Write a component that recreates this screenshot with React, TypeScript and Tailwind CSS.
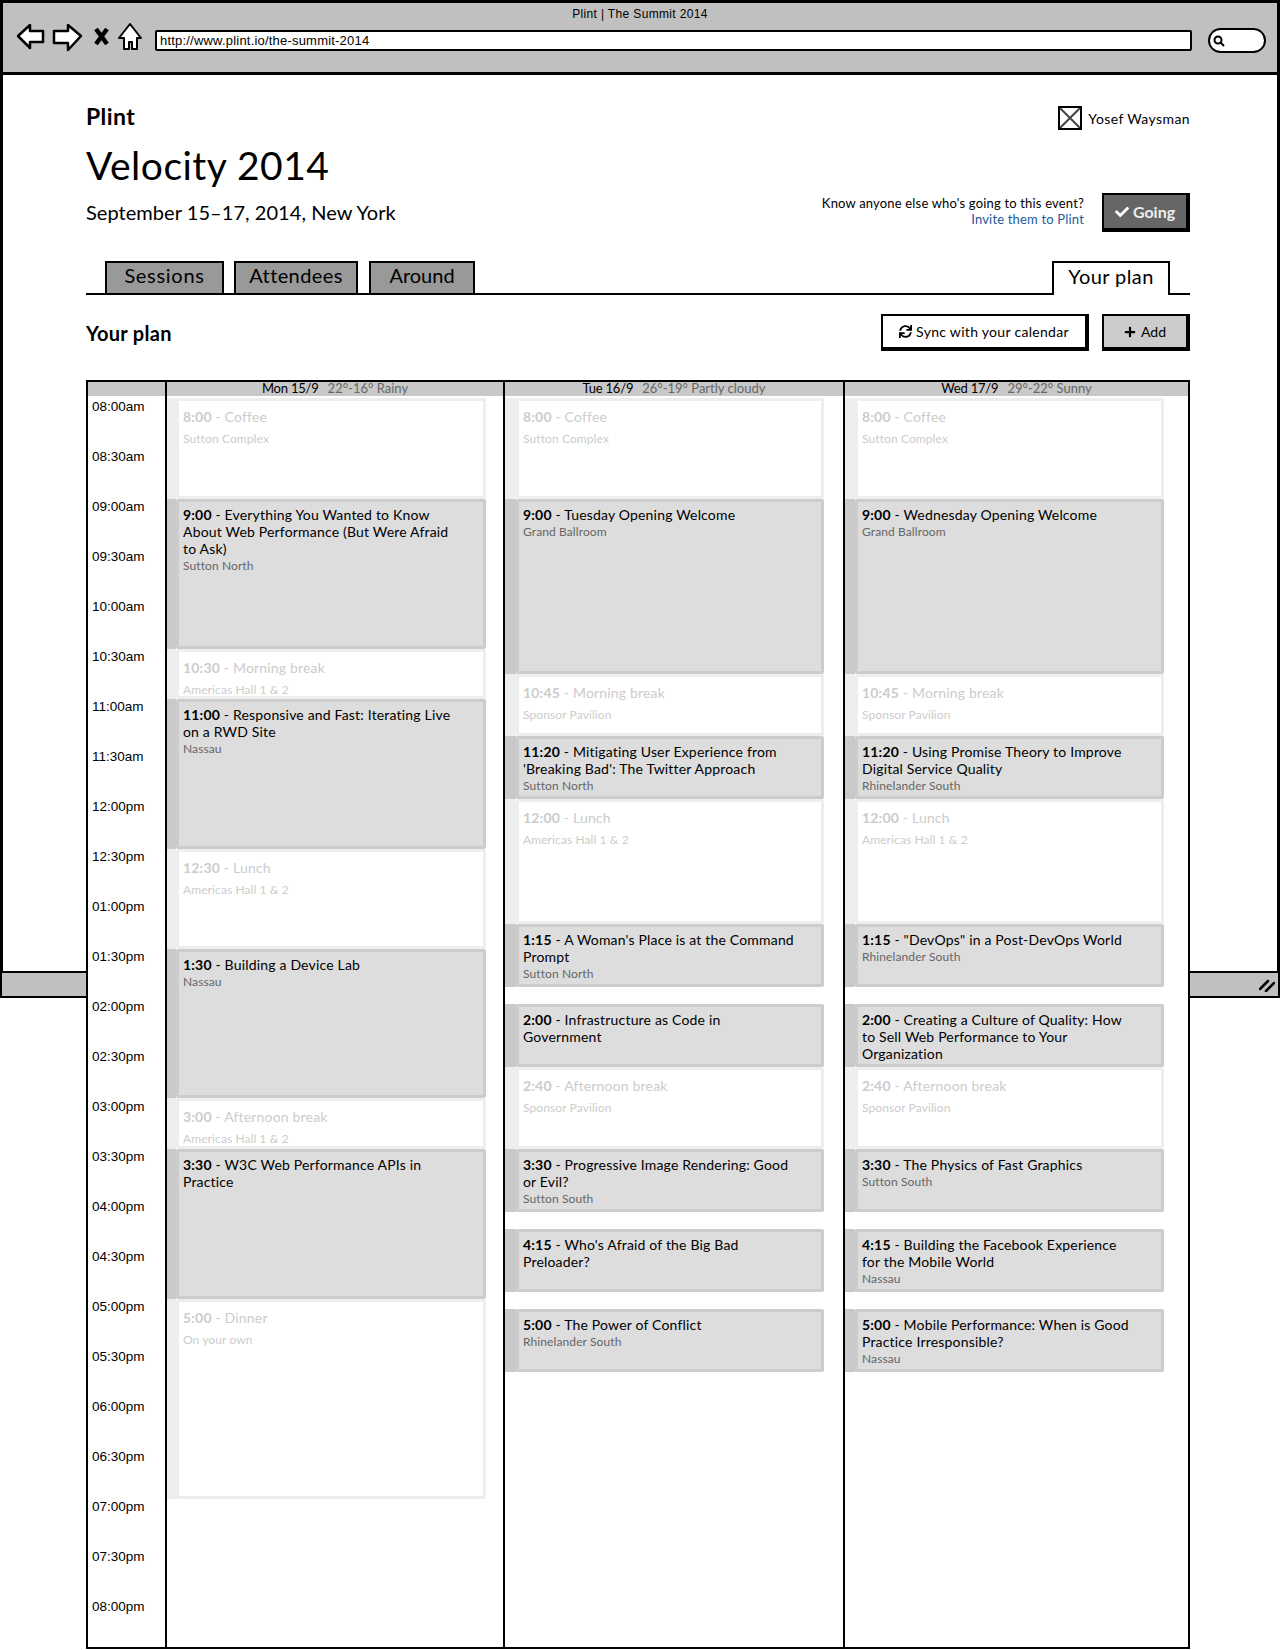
import { FaCheck, FaPlus, FaSync } from "react-icons/fa";

interface CalEvent {
  from: number;
  to: number;
  time: string;
  title: string;
  place?: string;
  soft?: boolean;
}

interface Day {
  label: string;
  weather: string;
  width: string;
  strip: string;
  card: string;
  events: CalEvent[];
}

const times = [
  "08:00am", "08:30am", "09:00am", "09:30am", "10:00am", "10:30am", "11:00am", "11:30am",
  "12:00pm", "12:30pm", "01:00pm", "01:30pm", "02:00pm", "02:30pm", "03:00pm", "03:30pm",
  "04:00pm", "04:30pm", "05:00pm", "05:30pm", "06:00pm", "06:30pm", "07:00pm", "07:30pm", "08:00pm",
];

const days: Day[] = [
  {
    label: "Mon 15/9",
    weather: "22°-16° Rainy",
    width: "w-[338px]",
    strip: "w-[9px]",
    card: "w-[310px]",
    events: [
      { from: 398, to: 499, time: "8:00", title: "Coffee", place: "Sutton Complex", soft: true },
      { from: 499, to: 649, time: "9:00", title: "Everything You Wanted to Know\nAbout Web Performance (But Were Afraid\nto Ask)", place: "Sutton North" },
      { from: 649, to: 699, time: "10:30", title: "Morning break", place: "Americas Hall 1 & 2", soft: true },
      { from: 699, to: 849, time: "11:00", title: "Responsive and Fast: Iterating Live\non a RWD Site", place: "Nassau" },
      { from: 849, to: 949, time: "12:30", title: "Lunch", place: "Americas Hall 1 & 2", soft: true },
      { from: 949, to: 1098, time: "1:30", title: "Building a Device Lab", place: "Nassau" },
      { from: 1098, to: 1149, time: "3:00", title: "Afternoon break", place: "Americas Hall 1 & 2", soft: true },
      { from: 1149, to: 1299, time: "3:30", title: "W3C Web Performance APIs in\nPractice" },
      { from: 1299, to: 1499, time: "5:00", title: "Dinner", place: "On your own", soft: true },
    ],
  },
  {
    label: "Tue 16/9",
    weather: "26°-19° Partly cloudy",
    width: "w-[340px]",
    strip: "w-[11px]",
    card: "w-[308px]",
    events: [
      { from: 398, to: 499, time: "8:00", title: "Coffee", place: "Sutton Complex", soft: true },
      { from: 499, to: 674, time: "9:00", title: "Tuesday Opening Welcome", place: "Grand Ballroom" },
      { from: 674, to: 736, time: "10:45", title: "Morning break", place: "Sponsor Pavilion", soft: true },
      { from: 736, to: 799, time: "11:20", title: "Mitigating User Experience from\n'Breaking Bad': The Twitter Approach", place: "Sutton North" },
      { from: 799, to: 924, time: "12:00", title: "Lunch", place: "Americas Hall 1 & 2", soft: true },
      { from: 924, to: 987, time: "1:15", title: "A Woman's Place is at the Command\nPrompt", place: "Sutton North" },
      { from: 1004, to: 1067, time: "2:00", title: "Infrastructure as Code in\nGovernment" },
      { from: 1067, to: 1149, time: "2:40", title: "Afternoon break", place: "Sponsor Pavilion", soft: true },
      { from: 1149, to: 1212, time: "3:30", title: "Progressive Image Rendering: Good\nor Evil?", place: "Sutton South" },
      { from: 1229, to: 1292, time: "4:15", title: "Who's Afraid of the Big Bad\nPreloader?" },
      { from: 1309, to: 1372, time: "5:00", title: "The Power of Conflict", place: "Rhinelander South" },
    ],
  },
  {
    label: "Wed 17/9",
    weather: "29°-22° Sunny",
    width: "flex-1",
    strip: "w-[10px]",
    card: "w-[309px]",
    events: [
      { from: 398, to: 499, time: "8:00", title: "Coffee", place: "Sutton Complex", soft: true },
      { from: 499, to: 674, time: "9:00", title: "Wednesday Opening Welcome", place: "Grand Ballroom" },
      { from: 674, to: 736, time: "10:45", title: "Morning break", place: "Sponsor Pavilion", soft: true },
      { from: 736, to: 799, time: "11:20", title: "Using Promise Theory to Improve\nDigital Service Quality", place: "Rhinelander South" },
      { from: 799, to: 924, time: "12:00", title: "Lunch", place: "Americas Hall 1 & 2", soft: true },
      { from: 924, to: 987, time: "1:15", title: "\"DevOps\" in a Post-DevOps World", place: "Rhinelander South" },
      { from: 1004, to: 1067, time: "2:00", title: "Creating a Culture of Quality: How\nto Sell Web Performance to Your\nOrganization" },
      { from: 1067, to: 1149, time: "2:40", title: "Afternoon break", place: "Sponsor Pavilion", soft: true },
      { from: 1149, to: 1212, time: "3:30", title: "The Physics of Fast Graphics", place: "Sutton South" },
      { from: 1229, to: 1292, time: "4:15", title: "Building the Facebook Experience\nfor the Mobile World", place: "Nassau" },
      { from: 1309, to: 1372, time: "5:00", title: "Mobile Performance: When is Good\nPractice Irresponsible?", place: "Nassau" },
    ],
  },
];

const EventCard = ({ event, prevEnd, day }: { event: CalEvent; prevEnd: number; day: Day }) => (
  <div className="flex shrink-0" style={{ height: event.to - event.from, marginTop: event.from - prevEnd }}>
    <div className={`${day.strip} shrink-0 ${event.soft ? "bg-[#eeeeee]" : "bg-[#c9c9c9]"}`}></div>
    <div
      className={`${day.card} overflow-hidden rounded-[2px] border-[3px] pl-[4px] ${
        event.soft ? "border-[#eeeeee] bg-white pt-[7px]" : "border-[#cccccc] bg-[#dddddd] pt-[4px]"
      }`}
    >
      <div className={`whitespace-pre-line text-[14px] leading-[17px] tracking-[0.18px] ${event.soft ? "text-[#cccccc]" : "text-black"}`}>
        <span className="font-bold">{event.time}</span> - {event.title}
      </div>
      {event.place && (
        <div className={`text-[12px] leading-[15px] tracking-[0.1px] ${event.soft ? "mt-[6px] text-[#cccccc]" : "mt-[1px] text-[#666666]"}`}>
          {event.place}
        </div>
      )}
    </div>
  </div>
);

const App = () => {
  return (
    <div className="relative h-[1650px] w-[1280px] overflow-hidden bg-white font-['Lato',sans-serif] text-black">
      <div className="relative h-[998px] border-x-[3px] border-t-[3px] border-black">
        {/* browser chrome */}
        <div className="relative flex h-[72px] items-start border-b-[3px] border-black bg-[#c0c0c0] pl-[13px] pt-[20px]">
          <div className="absolute left-0 right-0 top-[3px] text-center font-['Liberation_Sans',sans-serif] text-[12px] leading-[16px] tracking-[0.35px]">
            Plint | The Summit 2014
          </div>
          <svg width="128" height="30" viewBox="0 0 128 30" className="shrink-0">
            <path d="M2 13 L14 2 L14 8 L27 8 L27 19 L14 19 L14 25 Z" fill="white" stroke="black" strokeWidth="2.5" strokeLinejoin="round" />
            <path d="M65 13 L52 2 L52 8 L38 8 L38 20 L52 20 L52 27 Z" fill="white" stroke="black" strokeWidth="2.5" strokeLinejoin="round" />
            <path d="M80 6 L91 21 M91 6 L80 21" fill="none" stroke="black" strokeWidth="4.5" />
            <path d="M114 1 L103 15 L108 15 L108 26 L113 26 L113 19 L116 19 L116 26 L121 26 L121 15 L125 15 Z" fill="white" stroke="black" strokeWidth="2" strokeLinejoin="round" />
          </svg>
          <div className="ml-[11px] mt-[7px] flex h-[21px] w-[1037px] items-center rounded-[2px] border-[2.5px] border-black bg-white pl-[3px] font-['Liberation_Sans',sans-serif] text-[13px] tracking-[0.2px]">
            http://www.plint.io/the-summit-2014
          </div>
          <div className="ml-[16px] mt-[5px] flex h-[25px] w-[58px] items-center rounded-[14px] border-[2.5px] border-black bg-white pl-[3px]">
            <svg width="12" height="12" viewBox="0 0 12 12">
              <circle cx="5" cy="5" r="3.5" fill="none" stroke="black" strokeWidth="2" />
              <path d="M7.5 7.5 L11 11" stroke="black" strokeWidth="2" />
            </svg>
          </div>
        </div>

        {/* page body */}
        <div className="relative z-10 pl-[83px] pr-[87px]">
          <div className="flex items-center justify-between pt-[27px]">
            <div className="text-[23px] font-bold leading-[28px] tracking-[0.4px]">Plint</div>
            <div className="flex items-center gap-[6px] pt-[4px]">
              <div className="flex h-[24px] w-[24px] items-center justify-center border-2 border-black bg-white">
                <svg width="20" height="20" viewBox="0 0 20 20">
                  <path d="M0 0 L20 20 M20 0 L0 20" stroke="#444444" strokeWidth="2" />
                </svg>
              </div>
              <span className="text-[14px] tracking-[0.4px]">Yosef Waysman</span>
            </div>
          </div>

          <div className="mt-[11px] text-[39px] leading-[48px] tracking-[0.5px]">Velocity 2014</div>

          <div className="-mt-[1px] flex items-start justify-between">
            <div className="pt-[11px] text-[20px] leading-[26px] tracking-[0.05px]">September 15–17, 2014, New York</div>
            <div className="mt-[5px] flex items-start">
              <div className="pt-[2px] text-right text-[13px] leading-[16px] tracking-[0.18px]">
                <div>Know anyone else who's going to this event?</div>
                <div className="text-[#1a5a9c]">Invite them to Plint</div>
              </div>
              <div className="ml-[18px] flex h-[39px] w-[88px] items-center justify-center gap-[4px] border-2 border-b-[4px] border-r-[4px] border-black bg-[#666666] text-[16px] font-bold text-[#eeeeee]">
                <FaCheck className="h-[14px] w-[14px] text-white" />
                Going
              </div>
            </div>
          </div>

          <div className="mt-[31px] flex h-[32px] items-end border-b-2 border-black">
            <div className="ml-[19px] flex h-[32px] w-[119px] items-center justify-center border-2 border-b-0 border-black bg-[#999999] pb-[6px] text-[20px] tracking-[0.7px]">Sessions</div>
            <div className="ml-[10px] flex h-[32px] w-[124px] items-center justify-center border-2 border-b-0 border-black bg-[#999999] pb-[6px] text-[20px] tracking-[0.4px]">Attendees</div>
            <div className="ml-[11px] flex h-[32px] w-[106px] items-center justify-center border-2 border-b-0 border-black bg-[#999999] pb-[6px] text-[20px]">Around</div>
            <div className="relative top-[2px] ml-auto mr-[20px] flex h-[34px] w-[118px] items-center justify-center border-2 border-b-0 border-black bg-white pb-[6px] text-[20px] tracking-[0.4px]">Your plan</div>
          </div>

          <div className="mt-[19px] flex items-center justify-between">
            <div className="text-[20px] font-bold tracking-[0.3px]">Your plan</div>
            <div className="flex">
              <div className="flex h-[37px] w-[208px] items-center justify-center gap-[4px] border-2 border-b-[4px] border-r-[4px] border-black bg-white text-[14px] tracking-[0.3px]">
                <FaSync className="h-[13px] w-[13px]" />
                Sync with your calendar
              </div>
              <div className="ml-[13px] flex h-[37px] w-[88px] items-center justify-center gap-[5px] border-2 border-b-[4px] border-r-[4px] border-black bg-[#cccccc] text-[14px]">
                <FaPlus className="h-[12px] w-[12px]" />
                Add
              </div>
            </div>
          </div>

          {/* schedule */}
          <div className="mt-[29px] flex h-[1269px] w-[1104px] border-[2.5px] border-black bg-white">
            <div className="w-[77px] shrink-0">
              <div className="h-[14px] bg-[#c8c8c8]"></div>
              <div className="pt-[1px]">
                {times.map((time) => (
                  <div key={time} className="h-[50px] pl-[4px] pt-[1px] font-['Liberation_Sans',sans-serif] text-[13.5px] leading-[18px]">
                    {time}
                  </div>
                ))}
              </div>
            </div>
            {days.map((day) => (
              <div key={day.label} className={`${day.width} border-l-2 border-black`}>
                <div className="flex h-[14px] items-center justify-center gap-[9px] bg-[#c8c8c8] text-[13px]">
                  <span className="tracking-[-0.2px]">{day.label}</span>
                  <span className="text-[#666666]">{day.weather}</span>
                </div>
                <div className="flex flex-col pt-[2px]">
                  {day.events.map((event, i) => (
                    <EventCard key={event.time} event={event} day={day} prevEnd={i === 0 ? 398 : day.events[i - 1].to} />
                  ))}
                </div>
              </div>
            ))}
          </div>
        </div>

        {/* bottom bar of the browser window */}
        <div className="absolute bottom-0 left-[-3px] right-[-3px] flex h-[27px] items-center justify-end border-x-2 border-y-[2.5px] border-black bg-[#c0c0c0] pr-[3px]">
          <svg width="16" height="14" viewBox="0 0 16 14">
            <path d="M1 11 L9 3 M7 13 L15 5" stroke="black" strokeWidth="2.5" strokeLinecap="round" />
          </svg>
        </div>
      </div>
    </div>
  );
};

export default App;
